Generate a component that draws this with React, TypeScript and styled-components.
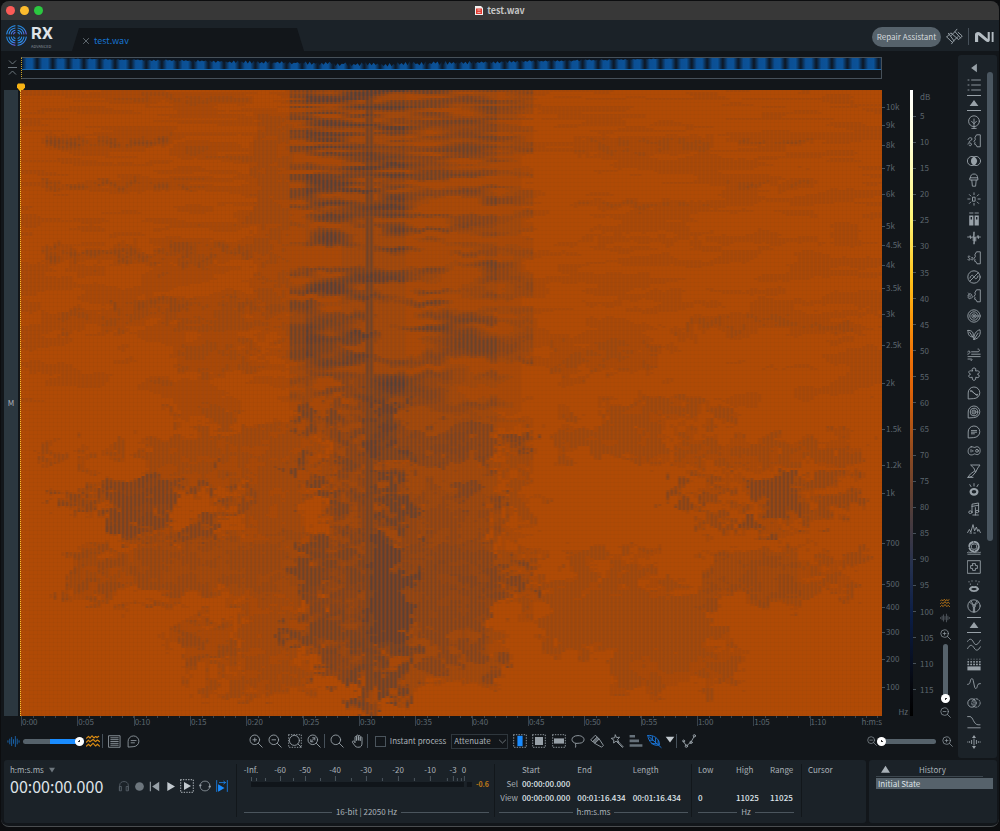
import React from 'react';
import styled, { createGlobalStyle } from 'styled-components';

const c = {
  bg: '#12161a',
  panel: '#1b2228',
  line: '#566069',
  icon: '#98a1a8',
  dim: '#5d666e',
  text: '#a9b1b7',
  bright: '#dfe4e8',
  blue: '#1a8cff',
  amber: '#c07a17',
};

const Global = createGlobalStyle`
  * { box-sizing: border-box; }
  body {
    margin: 0;
    background: #0c0d0f;
    font-family: "Noto Sans CJK SC", "Noto Sans", sans-serif;
    font-size: 8px;
    line-height: 12px;
    color: ${c.text};
  }
  button, input, select { font: inherit; color: inherit; margin: 0; }
  svg { display: block; flex: none; }
`;

/* ---------- window frame ---------- */

const Page = styled.div`
  min-height: 100vh;
  display: flex;
  flex-direction: column;
  padding: 1px 1px 4px;
`;

const Window = styled.div`
  flex: 1;
  display: flex;
  flex-direction: column;
  overflow: hidden;
  background: ${c.bg};
  border-radius: 8px;
  border-bottom: 1px solid #4a4d50;
`;

const TitleBar = styled.header`
  display: flex;
  align-items: center;
  height: 19px;
  padding: 0 5px;
  background: #383838;
`;

const Lights = styled.div`
  flex: 1;
  display: flex;
  gap: 5px;
`;

const Light = styled.button<{ $color: string }>`
  width: 9px;
  height: 9px;
  padding: 0;
  border: 0;
  border-radius: 50%;
  background: ${(p) => p.$color};
`;

const Title = styled.h1`
  display: flex;
  align-items: center;
  gap: 4px;
  margin: 0;
  font-size: 9px;
  font-weight: 700;
  color: #c4c4c4;
`;

const TitleEnd = styled.div`
  flex: 1;
`;

const Header = styled.div`
  display: flex;
  align-items: flex-end;
  height: 31px;
  padding: 0 5px;
  background: ${c.panel};
`;

const Brand = styled.div`
  display: flex;
  align-items: center;
  gap: 4px;
  width: 66px;
  height: 31px;
`;

const BrandName = styled.div`
  font-family: "Liberation Sans Narrow", Roboto, sans-serif;
  font-weight: 700;
  font-size: 17px;
  line-height: 20px;
  color: ${c.bright};
`;

const Edition = styled.div`
  font-size: 4px;
  line-height: 6px;
  color: #89929a;
`;

const Tab = styled.div`
  display: flex;
  align-items: center;
  gap: 5px;
  width: 232px;
  height: 23px;
  padding: 2px 10px 0;
  background: ${c.bg};
  clip-path: polygon(7px 0, calc(100% - 7px) 0, 100% 100%, 0 100%);
  color: #1673cf;
  font-size: 9px;
`;

const HeaderEnd = styled.div`
  flex: 1;
  display: flex;
  align-items: center;
  justify-content: flex-end;
  gap: 6px;
  height: 31px;
  padding-top: 2px;
`;

const Assistant = styled.button`
  height: 20px;
  width: 69px;
  padding: 0;
  border: 0;
  border-radius: 10px;
  background: #56626b;
  color: #d5dadd;
  font-size: 8px;
  white-space: nowrap;
`;

const Rule = styled.span<{ $h: number }>`
  width: 1px;
  height: ${(p) => p.$h}px;
  background: #465059;
`;

/* ---------- editor ---------- */

const Workspace = styled.div`
  flex: 1;
  display: flex;
  padding: 4px 2px 0 3px;
`;

const Editor = styled.main`
  flex: 1;
  min-width: 0;
  display: flex;
  flex-direction: column;
`;

const Row = styled.div`
  display: flex;
`;

const Gutter = styled.div`
  flex: none;
  width: 17px;
  display: flex;
  justify-content: center;
`;

const AxisGap = styled.div`
  flex: none;
  width: 76px;
`;

const Overview = styled.div`
  flex: 1;
  min-width: 0;
  height: 22px;
  margin-top: 2px;
  border: 1px solid #465059;
  border-left: 1px dotted #c9a227;
`;

const PinRow = styled.div`
  height: 11px;
  padding: 4px 0 0 13px;
`;

const Plot = styled.div`
  flex: 1;
  display: flex;
`;

const Channel = styled.div`
  flex: none;
  width: 14px;
  margin-right: 2px;
  display: flex;
  align-items: center;
  justify-content: center;
  background: #2b373f;
`;

const Spectrum = styled.div`
  flex: 1;
  min-width: 0;
  min-height: 100%;
  height: 0;
  display: grid;
  border-left: 1px dotted #f0c030;
  background: #b04a05;
`;

const Axis = styled.div<{ $w: number }>`
  flex: none;
  width: ${(p) => p.$w}px;
  display: flex;
  flex-direction: column;
  color: ${c.dim};
`;

const Step = styled.div<{ $grow: number }>`
  flex: ${(p) => p.$grow} 1 0;
`;

const Mark = styled.span<{ $tick: boolean }>`
  display: flex;
  align-items: center;
  gap: 1px;
  height: 0;
  &::before {
    content: '';
    width: 3px;
    height: 1px;
    background: ${(p) => (p.$tick ? '#465059' : 'transparent')};
  }
`;

const HertzMark = styled(Mark)`
  justify-content: flex-end;
  padding-right: 2px;
`;

const DecibelMark = styled(Mark)`
  gap: 4px;
`;

const ColorScale = styled.div`
  flex: none;
  width: 3px;
  background: linear-gradient(
    #ffffff 0%, #ffffd8 8%, #fff67a 20%, #ffc31c 30%, #fb9a0a 36%, #f07408 42%,
    #dd6208 48%, #8f4a20 58%, #4c3c3c 68%, #25314f 76%, #0b1d45 84%, #06080f 95%, #000 100%
  );
`;

const VerticalZoom = styled.div`
  flex: none;
  width: 20px;
  display: flex;
  flex-direction: column;
  align-items: center;
  justify-content: flex-end;
  gap: 3px;
  margin: 0 0 -2px 1px;
  padding-right: 6px;
`;

const Ruler = styled.div`
  flex: 1;
  min-width: 0;
  display: grid;
  grid-template-columns: repeat(14, 500fr) 643fr;
  height: 14px;
  color: ${c.dim};
`;

const Second = styled.div`
  display: flex;
  justify-content: space-between;
  min-width: 0;
  line-height: 12px;
  border-left: 1px solid #39424a;
  height: 10px;
  background: repeating-linear-gradient(90deg, #39424a 0 1px, transparent 1px 11px) 11px 0 / 100% 2px no-repeat;
`;

/* ---------- controls ---------- */

const Tools = styled.div`
  display: flex;
  align-items: center;
  height: 22px;
  margin-bottom: 8px;
`;

const Spacer = styled.div<{ $grow: number }>`
  flex: ${(p) => p.$grow} 1 0;
`;

const IconButton = styled.button<{ $w?: number; $h?: number; $tone?: string }>`
  flex: none;
  display: flex;
  align-items: center;
  justify-content: center;
  width: ${(p) => p.$w ?? 19}px;
  height: ${(p) => p.$h ?? 18}px;
  padding: 0;
  border: 0;
  background: none;
  color: ${(p) => p.$tone ?? c.icon};
`;

const Slider = styled.input<{ $w: number; $fill?: string }>`
  appearance: none;
  flex: none;
  width: ${(p) => p.$w}px;
  height: 10px;
  background: none;
  &::-webkit-slider-runnable-track {
    height: 5px;
    border-radius: 3px;
    background: ${(p) => p.$fill ?? '#56626b'};
  }
  &::-webkit-slider-thumb {
    appearance: none;
    width: 9px;
    height: 9px;
    margin-top: -2px;
    border-radius: 50%;
    background: radial-gradient(#333 0 1px, #fff 1px);
  }
`;

const VerticalSlider = styled.input`
  appearance: none;
  writing-mode: vertical-lr;
  direction: rtl;
  width: 10px;
  height: 59px;
  background: none;
  &::-webkit-slider-runnable-track {
    width: 5px;
    border-radius: 3px;
    background: #56626b;
  }
  &::-webkit-slider-thumb {
    appearance: none;
    width: 9px;
    height: 9px;
    margin-left: -2px;
    border-radius: 50%;
    background: radial-gradient(#333 0 1px, #fff 1px);
  }
`;

const Check = styled.label`
  display: flex;
  align-items: center;
  gap: 4px;
  margin: 0 5px 0 7px;
  white-space: nowrap;
`;

const Box = styled.input`
  appearance: none;
  width: 11px;
  height: 11px;
  border: 1px solid #4a545c;
`;

const Picker = styled.div`
  display: flex;
  align-items: center;
  width: 57px;
  height: 15px;
  margin-right: 2px;
  border: 1px solid #2f373d;
  color: ${c.text};
`;

const Select = styled.select`
  appearance: none;
  flex: 1;
  min-width: 0;
  padding: 0 0 0 2px;
  border: 0;
  background: none;
`;

/* ---------- module strip ---------- */

const Strip = styled.aside`
  flex: none;
  display: flex;
  width: 39px;
  margin-bottom: 2px;
  padding: 5px 4px 7px 4px;
  background: ${c.panel};
  border-radius: 3px;
`;

const Modules = styled.nav`
  flex: 1;
  display: flex;
  flex-direction: column;
  align-items: center;
`;

const Module = styled.button`
  flex: 1 1 0;
  width: 20px;
  min-height: 0;
  padding: 0;
  border: 0;
  background: none;
  color: ${c.icon};
  display: flex;
  align-items: center;
  justify-content: center;
`;

const ScrollTrack = styled.div`
  width: 6px;
  margin: 12px 0 210px 2px;
  border-radius: 3px;
  background: #4a5660;
`;

/* ---------- bottom panels ---------- */

const Bottom = styled.footer`
  display: flex;
  gap: 3px;
  height: 63px;
  margin: 0 2px 3px 3px;
`;

const Panel = styled.section`
  display: flex;
  background: ${c.panel};
  border-radius: 3px;
`;

const MainPanel = styled(Panel)`
  flex: 1;
`;

const HistoryPanel = styled(Panel)`
  flex-direction: column;
  width: 128px;
  padding: 3px 4px 0 7px;
`;

const Section = styled.div<{ $w: number }>`
  display: flex;
  flex-direction: column;
  flex: ${(p) => `${p.$w} 1 ${p.$w}px`};
  min-width: 0;
  margin: 4px 0 6px;
  border-right: 1px solid #12171b;
  &:last-child { border-right: 0; }
`;

const Transport = styled(Section)`
  padding: 0 6px;
  gap: 1px;
`;

const FormatButton = styled.button`
  display: flex;
  align-items: center;
  gap: 5px;
  height: 11px;
  padding: 0;
  border: 0;
  background: none;
`;

const TransportRow = styled.div`
  display: flex;
  align-items: center;
  justify-content: space-between;
`;

const Clock = styled.output`
  font-size: 16px;
  line-height: 20px;
  color: ${c.bright};
`;

const Buttons = styled.div`
  display: flex;
`;

const Meter = styled(Section)`
  padding: 0 5px 0 7px;
`;

const MeterScale = styled.div`
  display: flex;
  padding: 0 25px 0 7px;
  height: 12px;
`;

const MeterLabel = styled.span`
  display: flex;
  justify-content: center;
  width: 0;
  white-space: nowrap;
`;

const MeterBody = styled.div`
  display: flex;
  align-items: flex-start;
  gap: 4px;
  padding-left: 7px;
`;

const MeterTrack = styled.div`
  flex: 1;
  svg { width: 100%; }
`;

const Peak = styled.span`
  font-size: 7px;
  font-weight: 700;
  color: ${c.amber};
  line-height: 16px;
`;

const Caption = styled.div`
  display: flex;
  align-items: center;
  gap: 4px;
  margin-top: auto;
  line-height: 10px;
  white-space: nowrap;
  &::before, &::after {
    content: '';
    flex: 1;
    height: 1px;
    background: #4b555d;
  }
`;

const TableSection = styled(Section)`
  padding: 0 3px 0 4px;
`;

const RangeSection = styled(Section)`
  padding: 0 7px 0 6px;
`;

const CursorSection = styled(Section)`
  padding: 0 6px;
`;

const Table = styled.table`
  width: 100%;
  border-collapse: collapse;
  table-layout: fixed;
  th, td {
    padding: 0;
    height: 14px;
    line-height: 12px;
    font-weight: 400;
    text-align: left;
    white-space: nowrap;
    vertical-align: top;
  }
  tbody th { text-align: right; padding-right: 4px; }
  td { color: ${c.bright}; font-weight: 500; }
`;

const HistoryHead = styled.div`
  display: flex;
  align-items: center;
  gap: 29px;
  height: 14px;
  margin-right: 10px;
  padding-left: 5px;
  border-bottom: 1px solid #3c464e;
`;

const HistoryItem = styled.button`
  height: 11px;
  margin-top: 1px;
  padding: 0 2px;
  border: 0;
  background: #56626b;
  color: ${c.bright};
  line-height: 11px;
  text-align: left;
`;

/* ---------- icons ---------- */

type IconProps = { size?: number; children: React.ReactNode };

const Icon = ({ size = 14, children }: IconProps) => (
  <svg
    width={size}
    height={size}
    viewBox="0 0 14 14"
    fill="none"
    stroke="currentColor"
    strokeWidth="0.9"
    strokeLinecap="round"
    strokeLinejoin="round"
    aria-hidden="true"
  >
    {children}
  </svg>
);

const F = { fill: 'currentColor', stroke: 'none' };

const face = <path d="M8 3.5 9.5 .8H13.3V12.8H10L8.8 10.6 7.6 10.2 8 8.6 7 7.6 8.2 5.6Z" />;
const bubble = <path d="M1.2 12.6V7A5.8 5.8 0 1 1 7 12.6Z" />;

const modules: [string, React.ReactNode][] = [
  ['Ambience Match', <><circle cx="7" cy="6.2" r="5.4" /><path d="M7 4V13.4M4.5 6.2 7 8.8 9.5 6.2M4.8 13.4H9.2" /></>],
  ['Breath Control', <>{face}<path d="M1 5.5C1 3.5 5 3 5 5 5 7 2 6.2 2 8.2M.8 9.8C2 8.4 4 8.6 4.4 10 4.8 12 2 12.4 2 11" /></>],
  ['Center Extract', <><circle cx="5" cy="7" r="4.6" /><circle cx="9" cy="7" r="4.6" /><path {...F} d="M7 2.4A5.2 5.2 0 0 1 7 11.6 5.2 5.2 0 0 1 7 2.4Z" /></>],
  ['De-bleed', <><path d="M3.4 4.8A3.6 3.8 0 0 1 10.6 4.8" /><path d="M3.2 4.8H10.8V7H3.2ZM4.8 7.2 5.4 13.2H8.6L9.2 7.2" /></>],
  ['De-click', <><path d="M5.9 5.2H8.1V9.2H5.9ZM7 .8V2.6M7 11.4V13.2M.8 7H3M11 7H13.2M2.4 2.6 3.8 4M10.2 10 11.6 11.4M2.4 11.4 3.8 10M10.2 4 11.6 2.6" /></>],
  ['De-clip', <><path {...F} fillRule="evenodd" d="M2.2 3.4H6.4V13.6H2.2ZM7.6 3.4H11.8V13.6H7.6ZM3.6 5H5V7.6H3.6ZM9 5H10.4V7.6H9Z" /><path d="M2.6 1H6M8 1H11.4" /></>],
  ['De-crackle', <path d="M.6 6H3.2V4.6L3.6 7.6 4.4 6H6.2V9.6M6.6 6 7 .8V13.2L7.8 6V9.6M8.8 6V10M9.8 6H11V4.4L11.4 7.6V6H13.4" />],
  ['De-ess', <>{face}<path d="M3.2 5.6C2.6 4.6 .8 5 1 6 1.2 7 3.2 7 3.2 8.2 3.2 9.4 1.2 9.4.8 8.6M6 6.8C5.4 6.2 4.6 6.4 4.6 7 4.8 7.6 6 7.6 6 8.4 5.8 9.2 4.8 9 4.4 8.6" /></>],
  ['De-hum', <><circle cx="7" cy="7" r="6.2" /><path d="M2.8 11.2 11.4 2.6M3 8C4.2 4 6 5 7 7 8 9 9.8 10 11 6" /></>],
  ['De-plosive', <>{face}<path d="M1.8 5.6C3 4 5 5 4.8 6.6 6 7.6 5 9.6 3.6 9.2 2.4 10.4.6 9 1.4 7.8.6 7 1 6 1.8 5.6ZM3 6.6V8M1.4 4 2 4.6" /></>],
  ['De-reverb', <><circle cx="7" cy="7" r="6.2" /><circle cx="7" cy="7" r="4.2" /><circle cx="7" cy="7" r="2.2" /><circle cx="7" cy="7" r="1" {...F} /></>],
  ['De-rustle', <><path d="M1 2.4C4.6 2 7 4.4 6.2 8.8 2.4 9.2.6 6.4 1 2.4ZM2.6 4.2 6.8 10.4M7 11.4C6.4 7 9 2.4 13 1.8 14 6 12.2 10.8 7 11.4ZM7 11.6 11 5.2" /></>],
  ['De-wind', <path d="M4.6 4.8H11C13 4.8 12.8 1.6 11 2M4.6 7.2H13.2M1 9.6H13.2M.8 5C.8 3.6 2.8 3.6 3 5 3 6.4 1.6 7 .8 7.2M1 12H4C5.6 12 5.6 14 4 13.4" />],
  ['Deconstruct', <path d="M5.2 1.8C5.8.6 8.2.6 8.8 1.8L8.6 4 10.4 3.8C12 3.4 13 5.6 11.6 6.6L10.4 7.2 11.8 8C12.8 9.2 11.8 11 10.2 10.6L8.8 10.2 8.6 12.4C8 13.6 6 13.6 5.4 12.4L5.2 10.2 3.6 10.6C2 10.8 1.2 9 2.2 8L3.6 7.2 2.4 6.4C1.2 5.4 2 3.4 3.6 3.8L5.4 4Z" />],
  ['Dialogue Contour', <>{bubble}<path d="M3.4 5.4C5 3.6 6 6 7 7 8 8 9.4 9.6 10.8 8.4M3.6 4.4 10.4 9.8" /></>],
  ['Dialogue De-reverb', <>{bubble}<circle cx="7" cy="7" r="3.8" /><circle cx="7" cy="7" r="2" /><circle cx="7" cy="7" r=".8" {...F} /></>],
  ['Dialogue Isolate', <>{bubble}<path d="M4.4 5.6H9.6M4.4 7.2H9.6M4.4 8.8H7.4" /></>],
  ['Guitar De-noise', <><path d="M4.2 2.8C6 2.4 7 3.8 8 3.4 9.2 2.2 12 2.6 12.8 4.6 13.8 7.4 12.6 10.6 10.2 10.6 8.8 10.6 8 9.6 7 10 5.6 11.4 2.2 11.4 1.4 9 .8 7 1 3.6 4.2 2.8Z" /><circle cx="10" cy="6.8" r="1.4" /><path d="M4 5.6V8M5.8 6.4V7.4" /></>],
  ['Interpolate', <path d="M4 1H13L10.8 4 8.6 8.2 7 4.4ZM8.6 8.2 5 12.4 .8 13.4 3.4 10 7.6 7M.8 13.4H6" />],
  ['Mouth De-click', <><ellipse cx="7" cy="8.8" rx="3.4" ry="2.8" strokeWidth="2.2" /><path d="M7 .6V3M2.8 1.6 4 3.6M11.2 1.6 10 3.6" /></>],
  ['Music Rebalance', <><path d="M5 10V2.2L11.6 1V9.4M5 4.4 11.6 3.2M8.4 5.6V13M5.8 13H11.4" /><ellipse cx="3.4" cy="10.2" rx="1.7" ry="1.3" /><ellipse cx="10.2" cy="9.6" rx="1.5" ry="1.2" /></>],
  ['Spectral De-noise', <path d="M.6 10.6 2.4 7.4 3.8 10 6 2.6 7.6 8.8 9.4 5 10.8 9.4 11.8 7.4 13.4 10.6M3 11H4.6M6.8 11H8.4" />],
  ['Spectral Recovery', <><circle cx="7" cy="5.6" r="4.8" strokeWidth="1.8" strokeDasharray="5.5 2" /><rect x="4.4" y="3" width="5.2" height="5.2" rx="1.6" /><path d="M.6 11.4C2 10.4 3 12.2 4.6 11.4 6.4 10.4 7.6 12.2 9.4 11.4 11 10.6 12 12 13.4 11.4M.8 13.2H13.2" /></>],
  ['Spectral Repair', <><path d="M.7.7H13.3V13.3H.7Z" /><path d="M5.6 3.6H8.4V5.6H10.4V8.4H8.4V10.4H5.6V8.4H3.6V5.6H5.6Z" /></>],
  ['Voice De-noise', <><path d="M2.8 9C5 6 6 7.2 7 7.2 8 7.2 9 6 11.2 9 9.4 11.8 4.6 11.8 2.8 9Z" strokeWidth="1.8" /><path d="M2 1.6V2M5 .8V1.2M9 .8V1.2M12 1.6V2M3.4 4V4.4M10.6 4V4.4" /></>],
  ['Wow & Flutter', <><circle cx="7" cy="7" r="6.2" /><circle cx="7" cy="7" r="1.2" /><path d="M6 6.2 2.4 3M8 6.2 11.6 3M6.4 8.2V13M7.6 8.2V13M4 1.8 6.4 5.8M10 1.8 7.6 5.8" /></>],
];

const utilities: [string, React.ReactNode][] = [
  ['Azimuth', <path d="M.6 3.4C2.6.2 4.6.4 6.6 4.4 8.8 8.6 11 6.4 13.4 2.2M.6 10.6C2.8 6.2 5 6.4 7 9.8 9.2 13.4 11.2 12.8 13.4 8.8" />],
  ['Dither', <><path {...F} d="M.4 9.4H13.6V13.4H.4Z" /><path d="M1.2 7.4H13M1.2 4.8H13" strokeDasharray=".1 2.8" strokeWidth="1.8" /><path d="M1.2 2.2H13" strokeDasharray=".1 2.8" /></>],
  ['EQ', <path d="M.6 8.4C2 8.4 2.8 7.8 3.4 4.8 4 2 5.6 1.8 6.2 4.4L7.6 11C8.2 13.2 9.6 13 10.2 10.6 10.6 8.6 10.8 7.6 13.4 7.6" />],
  ['Fade', <><circle cx="5" cy="7" r="4.2" /><circle cx="9" cy="7" r="4.2" strokeDasharray="1.4 1.4" /><path d="M7 3.4V10.6" strokeDasharray="1 1.2" /></>],
  ['Gain', <path d="M.6 1.6H3C6 1.6 6.6 9.6 11 9.8H13M.8 12.8H13.2" />],
  ['Mixing', <><path d="M7 4V10M4.6 5.4V8.6M9.4 5.4V8.6M2.6 6.6V7.4M11.4 6.6V7.4M.6 7H1M13 7H13.4" /><path {...F} d="M7 0 9 3H5ZM7 14 9 11H5Z" /></>],
];

const groupIcon = (
  <svg width="14" height="16" viewBox="0 0 14 16" fill="currentColor" aria-hidden="true">
    <path d="M0 0H14V1H0ZM0 15H14V16H0ZM7 5 11.4 11H2.6Z" />
  </svg>
);

const lens = <><circle cx="5.8" cy="5.8" r="4.8" /><path d="M9.4 9.4 13.2 13.2" /></>;
const minus = <path d="M4 5.8H7.6" />;
const plus = <path d="M4 5.8H7.6M5.8 4V7.6" />;
const waves = (
  <path d="M.6 4.2 2.4 2.4 4 4 6 1.8 8 4 9.6 2.4 11 3.6 13.2 2M.6 8 2.4 6.2 4 7.8 7 5.4 9.6 7.6 11.4 6 13.4 7.6M.6 12 2.4 10.2 4.4 12 7 9.2 9.6 12 11.4 10.2 13.4 12" strokeDasharray="1.6 .6" strokeWidth="1.2" />
);
const bars = <path d="M1 6.2V7.8M3 4.4V9.6M5 2.6V11.4M7 5V9M9 1.6V12.4M11 4.4V9.6M13 6.2V7.8" />;
const marquee = <path d="M.7.7H13.3V13.3H.7Z" strokeDasharray=".6 2" />;

/* ---------- spectrogram drawing ---------- */

const W = 860;
const H = 626;

const hash = (x: number, y: number) => {
  const n = Math.sin(x * 127.1 + y * 311.7) * 43758.5453;
  return n - Math.floor(n);
};

const noise = (x: number, y: number) => {
  const xi = Math.floor(x);
  const yi = Math.floor(y);
  const u = x - xi;
  const v = y - yi;
  const su = u * u * (3 - 2 * u);
  const sv = v * v * (3 - 2 * v);
  const top = hash(xi, yi) * (1 - su) + hash(xi + 1, yi) * su;
  const low = hash(xi, yi + 1) * (1 - su) + hash(xi + 1, yi + 1) * su;
  return top * (1 - sv) + low * sv;
};

// Energy dips: x from, x to, y from, y to, depth, erosion of the middle.
const dips: number[][] = [
  [120, 290, 348, 392, 0.18, 0.5], [20, 90, 354, 374, 0.16, 1], [145, 215, 314, 336, 0.2, 1],
  [20, 85, 394, 424, 0.34, 1], [85, 146, 392, 446, 0.5, 0.2], [145, 205, 382, 406, 0.44, 1],
  [150, 205, 430, 448, 0.44, 1], [170, 230, 402, 424, 0.34, 1], [40, 98, 458, 508, 0.22, 0.6],
  [95, 280, 446, 508, 0.22, 0.1], [220, 280, 330, 600, 0.16, 0.3], [144, 214, 530, 572, 0.22, 0.8],
  [175, 290, 576, 604, 0.2, 1],
  [266, 318, 322, 352, 0.6, 0.9], [300, 346, 334, 354, 0.6, 0.5], [266, 336, 366, 392, 0.6, 0.9],
  [268, 340, 400, 418, 0.6, 0.9], [266, 344, 446, 490, 0.6, 0.9], [318, 350, 424, 484, 0.55, 0.6],
  [266, 348, 518, 562, 0.55, 0.8], [290, 350, 460, 590, 0.46, 0.4], [300, 350, 300, 470, 0.42, 0.6],
  [344, 388, 300, 372, 0.8, 0.3], [384, 475, 336, 372, 0.46, 0.1], [340, 388, 372, 452, 0.72, 0.8],
  [344, 386, 446, 548, 0.85, 0], [384, 474, 448, 540, 0.44, 0.3], [326, 388, 540, 618, 0.68, 0.9],
  [420, 482, 388, 416, 0.5, 0.8], [400, 510, 338, 352, 0.46, 0.6], [410, 510, 476, 502, 0.52, 0.8],
  [400, 474, 530, 590, 0.4, 0.9], [384, 475, 396, 470, 0.34, 0.3], [480, 510, 350, 520, 0.16, 0.8],
  [384, 475, 300, 600, 0.18, 0.2],
  [530, 640, 326, 366, 0.2, 0.4], [576, 716, 308, 336, 0.18, 0.8], [652, 838, 346, 374, 0.18, 0.5],
  [640, 690, 394, 418, 0.36, 1], [670, 716, 380, 440, 0.26, 1], [722, 780, 384, 442, 0.44, 0.9],
  [780, 838, 384, 428, 0.26, 1], [536, 640, 460, 500, 0.18, 0.9], [515, 690, 492, 560, 0.2, 0.2],
  [580, 716, 545, 600, 0.2, 0.7], [680, 780, 458, 514, 0.22, 0.2], [775, 840, 466, 516, 0.2, 0.8],
  [536, 635, 250, 282, 0.15, 0.7], [640, 838, 226, 242, 0.15, 0.8],
  [20, 150, 44, 56, 0.3, 0.6], [20, 170, 90, 97, 0.3, 0.5], [90, 230, 4, 12, 0.2, 0.6], [20, 230, 154, 172, 0.22, 0.7],
  [90, 270, 206, 226, 0.22, 0.6], [20, 210, 222, 238, 0.18, 0.8], [230, 270, 20, 240, 0.16, 0.5],
  [150, 270, 250, 282, 0.15, 0.8], [550, 690, 46, 66, 0.17, 0.7], [718, 790, 46, 54, 0.26, 0.5],
  [700, 790, 90, 97, 0.24, 0.5], [550, 700, 110, 118, 0.17, 0.6], [560, 840, 140, 152, 0.12, 0.7],
];

const column = (x: number) => {
  if (x < 266) return 0.06 + (x / 266) * 0.1;
  if (x < 284) return 0.5;
  if (x < 320) return 0.76;
  if (x < 342) return 0.86;
  if (x < 350) return 1;
  if (x < 384) return 0.86;
  if (x < 426) return 0.62;
  if (x < 474) return 0.54;
  if (x < 510) return 0.32;
  return 0.07;
};

const depthAt = (x: number, y: number) => {
  // Fine warping gives the dips their frayed outlines.
  const amp = Math.min(1, 0.12 + y / 420);
  const wx = x + ((noise(x / 16, y / 14) - 0.5) * 28 + (noise(x / 6 + 7, y / 5) - 0.5) * 20) * amp;
  const wy = y + ((noise(x / 14 + 90, y / 12) - 0.5) * 30 + (noise(x / 7, y / 4 + 50) - 0.5) * 16) * amp;
  const hole = noise(x / 10 + 40, y / 8 + 4) * 0.65 + noise(x / 5, y / 3 + 9) * 0.35;
  let v = 0;
  for (const [x0, x1, y0, y1, d, erosion] of dips) {
    const dx = Math.min(wx - x0, x1 - wx);
    const dy = Math.min(wy - y0, y1 - wy);
    const inside = Math.min(dx, dy) + 2;
    if (inside > 0) {
      const cut = 1 - erosion * Math.min(1, Math.max(0, (0.56 - hole) * 4));
      v = Math.max(v, d * Math.min(1, inside / 6) * cut);
    }
  }
  const upper = y < 290 ? 1 : Math.max(0, 1 - (y - 290) / 60);
  const pitch = 2.6 + y / 160;
  const fray = (noise(x / 9, y / 9) - 0.5) * (y / 60);
  const streak = noise(x / 34 + 3, (y + fray) / pitch) * 0.62 + noise(x / 60, (y + fray) / (pitch * 3.2) + 20) * 0.38;
  const band = Math.max(0, streak - 0.34) * 2.7;
  const haze = x > 266 && x < 500 ? 0.16 : 0;
  const core = x > 342 && x < 350 ? 0.6 : 0;
  return Math.min(1, Math.max(v, upper * column(x) * Math.min(1.2, band + haze), core * (y < 600 ? 1 : 0.3)));
};

const LEVELS = 12;

const layers = (() => {
  const soft = Array.from({ length: LEVELS + 1 }, () => '');
  const bar = Array.from({ length: LEVELS + 1 }, () => '');
  for (let x = 0; x < W; x += 4) {
    let start = 0;
    let level = -1;
    for (let y = 0; y <= H; y += 2) {
      const next = y >= H ? -1 : Math.round(depthAt(x, y) * LEVELS);
      if (next !== level) {
        if (level > 0) {
          soft[level] += `M${x} ${start}h4V${y}h-4z`;
          bar[level] += `M${x + 1} ${start}h2V${y}h-2z`;
        }
        level = next;
        start = y;
      }
    }
  }
  return { soft, bar };
})();

const Fill = styled.svg`
  width: 100%;
  height: 100%;
`;

const Spectrogram = () => (
  <Fill viewBox={`0 0 ${W} ${H}`} preserveAspectRatio="none" role="img" aria-label="Spectrogram">
    <defs>
      <pattern id="weave" width="4" height="4" patternUnits="userSpaceOnUse">
        <path d="M0 0H1V4H0Z" fill="#6e3a12" opacity=".08" />
        <path d="M0 0H4V1H0Z" fill="#6e3a12" opacity=".07" />
      </pattern>
    </defs>
    <rect width={W} height={H} fill="#b04a05" />
    <rect width={W} height={H} fill="url(#weave)" />
    {layers.soft.map((d, i) => d && <path key={`s${i}`} d={d} fill="#6b4030" opacity={(i / LEVELS) * 0.74} />)}
    {layers.bar.map((d, i) => d && <path key={`b${i}`} d={d} fill="#43403f" opacity={(i / LEVELS) * 0.72} />)}
  </Fill>
);

const envelope = (() => {
  let d = 'M0 12V0';
  for (let x = 0; x <= 860; x += 2) {
    const mid = Math.max(0, 1 - Math.abs(x - 350) / 330);
    const spike = (x / 2) % 2 ? 2.6 : 0;
    d += `L${x} ${(mid * (4 + spike + hash(x, 1) * 2.4)).toFixed(1)}`;
  }
  return `${d}V12Z`;
})();

const OverviewWave = () => (
  <svg width="100%" height="12" viewBox="0 0 860 12" preserveAspectRatio="none" role="img" aria-label="Waveform overview">
    <defs>
      <linearGradient id="pulse" gradientUnits="userSpaceOnUse" x1="0" x2="15.6" y1="0" y2="0" spreadMethod="repeat">
        <stop offset="0" stopColor="#0d1a2a" />
        <stop offset=".3" stopColor="#0b4f94" />
        <stop offset=".65" stopColor="#0b5298" />
        <stop offset=".95" stopColor="#0d1a2a" />
      </linearGradient>
    </defs>
    <rect width="860" height="12" fill="#0e1620" />
    <path d={envelope} fill="url(#pulse)" />
    <rect y="11" width="860" height="1" fill="#1769b0" />
  </svg>
);

/* ---------- data ---------- */

const hertz: [string, number][] = [
  ['10k', 18], ['9k', 20], ['8k', 23], ['7k', 26], ['6k', 32], ['5k', 19], ['4.5k', 20], ['4k', 23],
  ['3.5k', 26], ['3k', 31], ['2.5k', 38], ['2k', 46], ['1.5k', 36], ['1.2k', 28], ['1k', 50],
  ['700', 41], ['500', 23], ['400', 25], ['300', 27], ['200', 28], ['100', 25],
];
const decibels = Array.from({ length: 23 }, (_, i) => String((i + 1) * 5));
const seconds = ['0:00', '0:05', '0:10', '0:15', '0:20', '0:25', '0:30', '0:35', '0:40', '0:45', '0:50', '0:55', '1:00', '1:05', '1:10'];
const meterMarks: [string, number][] = [
  ['-Inf.', 29], ['-60', 25], ['-50', 30], ['-40', 31], ['-30', 32], ['-20', 32], ['-10', 23], ['-3', 11], ['0', 0],
];

export default function App() {
  return (
    <>
      <Global />
      <Page>
        <Window>
          <TitleBar>
            <Lights>
              <Light $color="#fc5b57" aria-label="Close" />
              <Light $color="#fdbc2e" aria-label="Minimize" />
              <Light $color="#2bc840" aria-label="Zoom" />
            </Lights>
            <Title>
              <svg width="8" height="9" viewBox="0 0 8 9" aria-hidden="true">
                <path d="M0 0H6L8 2V9H0Z" fill="#f1f1f1" />
                <path d="M1 2.4H7V8H1Z" fill="#e0392f" />
                <path d="M2.4 4H5.6M2.4 6.4H5.6" stroke="#fff" strokeWidth=".7" />
              </svg>
              test.wav
            </Title>
            <TitleEnd />
          </TitleBar>

          <Header>
            <Brand>
              <svg width="21" height="21" viewBox="0 0 21 21" fill="none" strokeWidth="1.1" aria-hidden="true">
                <defs>
                  <linearGradient id="brand" x1="0" y1="0" x2="1" y2="1">
                    <stop offset="0" stopColor="#1d7fd0" />
                    <stop offset=".6" stopColor="#2f8be6" />
                    <stop offset="1" stopColor="#6f4fd0" />
                  </linearGradient>
                </defs>
                <g stroke="url(#brand)">
                  <path d="M.6 9.4A9.8 9.8 0 0 1 9.4.6M3 9.4A7.4 7.4 0 0 1 9.4 3M5.2 9.4A5 5 0 0 1 9.4 5.2M7.4 9.4A3 3 0 0 1 9.4 7.4" />
                  <path d="M11.6.6A9.8 9.8 0 0 1 20.4 9.4M11.6 3A7.4 7.4 0 0 1 18 9.4M11.6 5.2A5 5 0 0 1 15.8 9.4M11.6 7.4A3 3 0 0 1 13.6 9.4" />
                  <path d="M.6 11.6A9.8 9.8 0 0 0 9.4 20.4M3 11.6A7.4 7.4 0 0 0 9.4 18M5.2 11.6A5 5 0 0 0 9.4 15.8M7.4 11.6A3 3 0 0 0 9.4 13.6" />
                  <path d="M20.4 11.6A9.8 9.8 0 0 1 11.6 20.4M18 11.6A7.4 7.4 0 0 1 11.6 18M15.8 11.6A5 5 0 0 1 11.6 15.8M13.6 11.6A3 3 0 0 1 11.6 13.6" />
                </g>
              </svg>
              <div>
                <BrandName>RX</BrandName>
                <Edition>ADVANCED</Edition>
              </div>
            </Brand>
            <Tab>
              <IconButton $w={7} $h={12} $tone="#6d767d" aria-label="Close tab">
                <Icon size={6}><path d="M1 1 13 13M13 1 1 13" strokeWidth="2" /></Icon>
              </IconButton>
              test.wav
            </Tab>
            <HeaderEnd>
              <Assistant>Repair Assistant</Assistant>
              <IconButton $w={15} aria-label="Module chain">
                <Icon size={17}>
                  <path d="M.6 7.4 4 4 10.4 9.6 13.4 6.6 10 3.6M4 6.4 7.4 3 9 1M4.6 13 6.4 10.4 10 7M2 4.4 6.6 10.6M7.4 3 12 8.2M.6 7.4 4.8 11.4" strokeWidth=".8" />
                </Icon>
              </IconButton>
              <Rule $h={17} />
              <svg width="19" height="10" viewBox="0 0 18 11" preserveAspectRatio="none" aria-label="Native Instruments" role="img">
                <path d="M0 11V3C0 0 3.4-.8 5.4 1.2L12 7.8V0H14V9C14 11 11.6 11.6 10 10L3 3.2V11ZM15.8 0H17.6V11H15.8Z" fill="#b4bcc2" />
              </svg>
            </HeaderEnd>
          </Header>

          <Workspace>
            <Editor>
              <Row>
                <Gutter>
                  <IconButton $w={14} $h={24} $tone="#6d767d" aria-label="Collapse overview">
                    <svg width="11" height="17" viewBox="0 0 11 17" fill="none" stroke="currentColor" aria-hidden="true">
                      <path d="M2 1.5 5.5 5 9 1.5M1 8.5H10M2 15.5 5.5 12 9 15.5" />
                    </svg>
                  </IconButton>
                </Gutter>
                <Overview><OverviewWave /></Overview>
                <AxisGap />
              </Row>
              <PinRow>
                <svg width="8" height="9" viewBox="0 0 8 9" aria-hidden="true">
                  <path d="M1 .5H7L8 2V4.4L4.8 8.6H3.2L0 4.4V2Z" fill="#f6b214" />
                </svg>
              </PinRow>
              <Plot>
                <Channel>M</Channel>
                <Spectrum><Spectrogram /></Spectrum>
                <Axis $w={28}>
                  <Step $grow={17} />
                  {hertz.map(([label, grow]) => (
                    <Step key={label} $grow={grow}><Mark $tick>{label}</Mark></Step>
                  ))}
                  <Step $grow={4}><HertzMark $tick={false}>Hz</HertzMark></Step>
                </Axis>
                <ColorScale />
                <Axis $w={24}>
                  <Step $grow={7} />
                  <Step $grow={19}><DecibelMark $tick={false}>dB</DecibelMark></Step>
                  {decibels.map((label) => (
                    <Step key={label} $grow={26}><DecibelMark $tick>{label}</DecibelMark></Step>
                  ))}
                </Axis>
                <VerticalZoom>
                  <IconButton $w={12} $h={12} $tone={c.amber} aria-label="Spectrogram scale"><Icon size={10}>{waves}</Icon></IconButton>
                  <IconButton $w={12} $h={12} $tone="#6d767d" aria-label="Waveform scale"><Icon size={10}>{bars}</Icon></IconButton>
                  <IconButton $w={12} $h={14} aria-label="Zoom in vertically"><Icon size={11}>{lens}{plus}</Icon></IconButton>
                  <VerticalSlider type="range" defaultValue={0} aria-label="Vertical zoom" />
                  <IconButton $w={12} $h={12} aria-label="Zoom out vertically"><Icon size={11}>{lens}{minus}</Icon></IconButton>
                </VerticalZoom>
              </Plot>
              <Row>
                <Gutter />
                <Ruler>
                  {seconds.map((s) => (
                    <Second key={s}>{s}{s === '1:10' && <span>h:m:s</span>}</Second>
                  ))}
                </Ruler>
                <AxisGap />
              </Row>
              <Tools>
                <IconButton $tone="#1a6fc0" $w={19} aria-label="Show waveform"><Icon size={13}>{bars}</Icon></IconButton>
                <Slider
                  type="range" $w={61} defaultValue={100} aria-label="Waveform opacity"
                  $fill="linear-gradient(90deg, #56626b 45%, #1a8cff 45%)"
                />
                <IconButton $w={18} $tone="#d98a12" aria-label="Show spectrogram"><Icon>{waves}</Icon></IconButton>
                <Rule $h={14} />
                <IconButton $w={22} aria-label="Spectrogram settings">
                  <Icon size={13}><path d="M1 .8H13V13.2H1ZM3 3H11M3 5H11M3 7H11M3 9H11M3 11H11" /></Icon>
                </IconButton>
                <IconButton $w={17} aria-label="Comments"><Icon size={13}>{bubble}<path d="M4.4 6H9.8M4.4 8.4H8" /></Icon></IconButton>
                <Spacer $grow={105} />
                <IconButton aria-label="Zoom in"><Icon>{lens}{plus}</Icon></IconButton>
                <IconButton aria-label="Zoom out"><Icon>{lens}{minus}</Icon></IconButton>
                <IconButton $w={20} aria-label="Zoom to selection">
                  <Icon><circle cx="6.4" cy="6.4" r="5" /><path d="M10 10 13.2 13.2" />{marquee}</Icon>
                </IconButton>
                <IconButton aria-label="Reset zoom"><Icon>{lens}<path d="M3.8 7.8 7.8 3.8M3.8 5.6V7.8H6M5.6 3.8H7.8V6" /></Icon></IconButton>
                <Rule $h={14} />
                <IconButton $w={24} aria-label="Zoom tool"><Icon>{lens}</Icon></IconButton>
                <IconButton $w={18} aria-label="Hand tool">
                  <Icon>
                    <path d="M4 8.4V3.2C4 2.2 5.6 2.2 5.6 3.2V6.6 1.8C5.6.8 7.4.8 7.4 1.8V6.4 2.2C7.4 1.2 9.2 1.2 9.2 2.2V6.8 3.6C9.2 2.6 11 2.6 11 3.6V9C11 11.6 10 13.2 8 13.2H6.4C4.4 13.2 3.4 11 1.4 8.2 1 7.2 2.4 6.6 3 7.2Z" />
                  </Icon>
                </IconButton>
                <Rule $h={14} />
                <Check><Box type="checkbox" />Instant process</Check>
                <Picker>
                  <Select aria-label="Process mode"><option>Attenuate</option></Select>
                  <Icon size={9}><path d="M2 4.6 7 9.4 12 4.6" /></Icon>
                </Picker>
                <IconButton aria-label="Time selection"><Icon>{marquee}<path d="M4.4 1.8H9.6V12.2H4.4Z" fill={c.blue} stroke="none" /></Icon></IconButton>
                <IconButton $w={20} aria-label="Time-frequency selection"><Icon>{marquee}<path {...F} d="M3 3H11V11H3Z" /></Icon></IconButton>
                <IconButton aria-label="Frequency selection"><Icon>{marquee}<path {...F} d="M2 4.4H12V9.6H2Z" /></Icon></IconButton>
                <IconButton aria-label="Lasso"><Icon><path d="M5 9.4C-1 8.4-.4 1.6 7 1.6 14.6 1.6 15 9 8.4 9.2L5 9.4C3.4 9.8 5.6 11 4.6 13.2" /></Icon></IconButton>
                <IconButton $w={20} aria-label="Brush">
                  <Icon>
                    <path d="M1 5.6 5.4 1.2 7.2 3 2.8 7.4ZM2.8 7.4 4.8 9.4 9.2 5 7.2 3M9.2 5 13.4 11.4 11.6 13.2 4.8 9.4" />
                    <path {...F} d="M2.8 7.4 7.2 3 9.2 5 4.8 9.4Z" opacity=".6" />
                  </Icon>
                </IconButton>
                <IconButton aria-label="Magic wand"><Icon><path d="M5.4 1 6.6 3.6 9.6 3.2 7.6 5.6 8.8 8.4 6 7.2 3.6 9 3.8 6 1.2 4.4 4.4 3.8ZM8 7.4 13.2 12.8M7.2 8.2 12.4 13.4" /></Icon></IconButton>
                <IconButton aria-label="Harmonics" $tone="#66717a"><Icon><path {...F} d="M.6 1H6V3.6H.6ZM.6 5.6H10V8.2H.6ZM.6 10.2H13.4V12.8H.6Z" /></Icon></IconButton>
                <IconButton $w={18} $tone="#1a76d8" aria-label="Feather selection">
                  <Icon size={15}><path d="M.8 1.4C5 .6 12 3.6 11.6 10.2 5.6 12 1 6.4.8 1.4ZM2 2.6 13.2 12.6M5 2.4V5.2M8 4V8M10.4 6V10M2.4 5.8H5.6M4.4 9H9.2" /></Icon>
                </IconButton>
                <IconButton $w={13} $tone="#c3cacf" aria-label="Selection menu"><Icon size={10}><path {...F} d="M1 1H13L7 9Z" /></Icon></IconButton>
                <Rule $h={14} />
                <IconButton $w={24} aria-label="Find similar">
                  <Icon><path d="M1.4 7.4 4.4 12 9 8 12.4 2" /><circle cx="1.6" cy="7" r="1" /><circle cx="4.4" cy="12.2" r="1.2" /><circle cx="9" cy="8.4" r="1.2" /><circle cx="12.4" cy="1.8" r="1.2" /></Icon>
                </IconButton>
                <Spacer $grow={166} />
                <IconButton $w={10} aria-label="Zoom out horizontally"><Icon size={10}>{lens}{minus}</Icon></IconButton>
                <Slider type="range" $w={59} defaultValue={0} aria-label="Horizontal zoom" />
                <IconButton $w={22} aria-label="Zoom in horizontally"><Icon size={11}>{lens}{plus}</Icon></IconButton>
              </Tools>
            </Editor>

            <Strip>
              <Modules>
                <IconButton $h={16} aria-label="Collapse modules"><Icon size={10}><path {...F} d="M11 1V13L3 7Z" /></Icon></IconButton>
                <IconButton $h={17} aria-label="Module list"><Icon><path d="M4.6 2H13.4M4.6 7H13.4M4.6 12H13.4M1 2H2M1 7H2M1 12H2" /></Icon></IconButton>
                <Module aria-label="Repair">{groupIcon}</Module>
                {modules.map(([name, art]) => <Module key={name} aria-label={name}><Icon>{art}</Icon></Module>)}
                <Module aria-label="Utility">{groupIcon}</Module>
                {utilities.map(([name, art]) => <Module key={name} aria-label={name}><Icon>{art}</Icon></Module>)}
              </Modules>
              <ScrollTrack />
            </Strip>
          </Workspace>

          <Bottom>
            <MainPanel>
              <Transport $w={233}>
                <FormatButton>h:m:s.ms <Icon size={6}><path {...F} fill="#6d767d" d="M0 2H14L7 13Z" /></Icon></FormatButton>
                <TransportRow>
                  <Clock>00:00:00.000</Clock>
                  <Buttons>
                    <IconButton $w={16} $tone="#5d666e" aria-label="Monitor"><Icon size={12}><path d="M2 12V6C2 .4 12 .4 12 6V12M2 7.6H4V12.6H2ZM10 7.6H12V12.6H10Z" /></Icon></IconButton>
                    <IconButton $w={14} $tone="#6d767d" aria-label="Record"><Icon size={9}><circle cx="7" cy="7" r="6.8" {...F} /></Icon></IconButton>
                    <IconButton $w={17} aria-label="Rewind"><Icon size={11}><path {...F} d="M1 1H2.4V13H1ZM13 1V13L4 7Z" /></Icon></IconButton>
                    <IconButton $w={15} $tone="#c3cacf" aria-label="Play"><Icon size={9}><path {...F} d="M2 0 14 7 2 14Z" /></Icon></IconButton>
                    <IconButton $w={17} $tone="#c3cacf" aria-label="Play selection"><Icon>{marquee}<path {...F} d="M4 3 11 7 4 11Z" /></Icon></IconButton>
                    <IconButton $w={19} aria-label="Loop"><Icon size={12}><path d="M1.4 5.6A5.8 5.8 0 0 1 12.6 5.6M12.6 8.4A5.8 5.8 0 0 1 1.4 8.4" /><path {...F} d="M-.4 5.4H3.4L1.4 8.6ZM14.4 8.6H10.6L12.6 5.4Z" /></Icon></IconButton>
                    <IconButton $w={16} $tone={c.blue} aria-label="Follow playback"><Icon size={12}><path d="M.8.6V13.4M13.2.6V13.4M4 3H11M9 1.4 11 3 9 4.6" /><path {...F} d="M2.4 5 10 9.4 2.4 13.8Z" /></Icon></IconButton>
                  </Buttons>
                </TransportRow>
              </Transport>
              <Meter $w={258}>
                <MeterScale>
                  {meterMarks.map(([label, grow]) => (
                    <Step key={label} $grow={grow}><MeterLabel>{label}</MeterLabel></Step>
                  ))}
                </MeterScale>
                <MeterBody>
                  <MeterTrack>
                    <svg height="11" viewBox="0 0 221 11" preserveAspectRatio="none" aria-hidden="true">
                      <path d="M0 6H213V11H0ZM216 6H221V11H216Z" fill="#10151a" />
                      <path
                        d="M.5 1V5M29.5 0V5M54.5 0V5M84.5 0V5M115.5 0V5M147.5 0V5M179.5 0V5M202.5 0V5M213.5 0V5M5.5 2V5M14.5 2V5M42.5 2V5M69.5 2V5M100.5 2V5M131.5 2V5M163.5 2V5M196.5 2V5M206.5 2V5M210.5 2V5"
                        stroke="#4b555d"
                      />
                    </svg>
                  </MeterTrack>
                  <Peak>-0.6</Peak>
                </MeterBody>
                <Caption>16-bit | 22050 Hz</Caption>
              </Meter>
              <TableSection $w={197}>
                <Table>
                  <colgroup><col width="23" /><col /><col /><col /></colgroup>
                  <thead><tr><td /><th scope="col">Start</th><th scope="col">End</th><th scope="col">Length</th></tr></thead>
                  <tbody>
                    <tr><th scope="row">Sel</th><td>00:00:00.000</td><td /><td /></tr>
                    <tr><th scope="row">View</th><td>00:00:00.000</td><td>00:01:16.434</td><td>00:01:16.434</td></tr>
                  </tbody>
                </Table>
                <Caption>h:m:s.ms</Caption>
              </TableSection>
              <RangeSection $w={110}>
                <Table>
                  <colgroup><col width="38" /><col width="34" /><col /></colgroup>
                  <thead><tr><th scope="col">Low</th><th scope="col">High</th><th scope="col">Range</th></tr></thead>
                  <tbody>
                    <tr><td /><td /><td /></tr>
                    <tr><td>0</td><td>11025</td><td>11025</td></tr>
                  </tbody>
                </Table>
                <Caption>Hz</Caption>
              </RangeSection>
              <CursorSection $w={64}>Cursor</CursorSection>
            </MainPanel>
            <HistoryPanel>
              <HistoryHead>
                <Icon size={9}><path {...F} d="M7 1 14 12H0Z" /></Icon>
                History
              </HistoryHead>
              <HistoryItem>Initial State</HistoryItem>
            </HistoryPanel>
          </Bottom>
        </Window>
      </Page>
    </>
  );
}
